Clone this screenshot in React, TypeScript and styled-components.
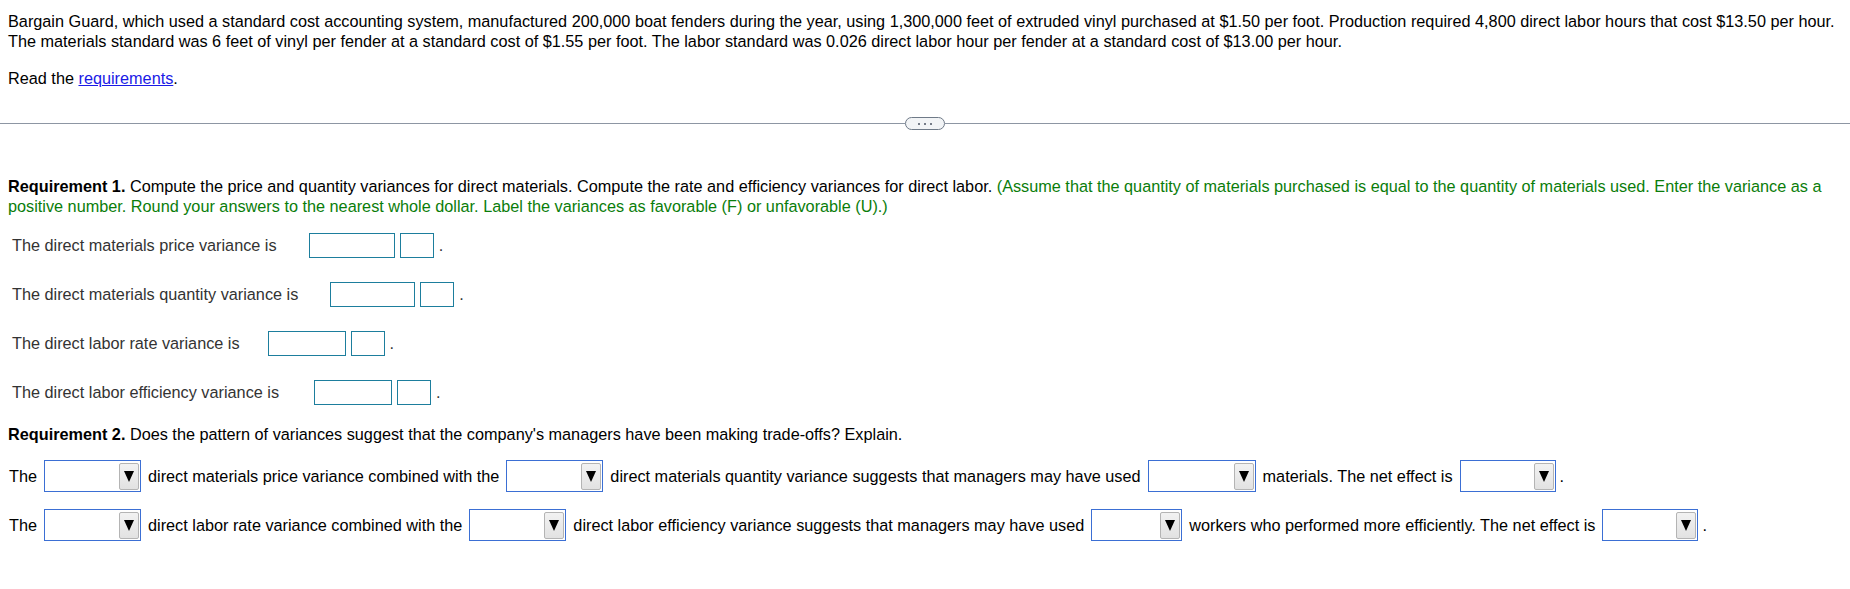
import React from "react";
import styled, { createGlobalStyle } from "styled-components";

const Global = createGlobalStyle`
  html, body { margin: 0; padding: 0; background: #fff; }
  body {
    font-family: "Liberation Sans", Arial, sans-serif;
    font-size: 16.25px;
    color: #000;
  }
`;

const Page = styled.div`
  width: 1850px;
  padding-top: 11px;
`;

const Section = styled.div`
  padding: 0 2px 0 8px;
`;

const Para = styled.p<{ $mt?: number }>`
  margin: ${(p) => p.$mt ?? 0}px 0 0;
  line-height: 20px;
`;

const Link = styled.a`
  color: #1a1ae6;
  text-decoration: underline;
`;

const Divider = styled.div`
  display: flex;
  align-items: center;
  height: 13px;
  margin-top: 29px;
`;

const Rule = styled.div`
  flex: 1;
  height: 1px;
  background: #8d96a3;
`;

const Pill = styled.div`
  width: 40px;
  height: 13px;
  box-sizing: border-box;
  border: 1px solid #6f7a88;
  border-radius: 7px;
  background: #f2f4f6;
  display: flex;
  align-items: center;
  justify-content: center;
  gap: 4px;
`;

const Dot = styled.span`
  width: 2px;
  height: 2px;
  background: #4b5563;
  border-radius: 1px;
`;

const Bold = styled.b`
  font-weight: 700;
`;

const Green = styled.span`
  color: #0a7d0a;
`;

const Rows = styled.div`
  display: flex;
  flex-direction: column;
  gap: 24px;
  margin-top: 17px;
`;

const VarRow = styled.div`
  display: flex;
  align-items: center;
  height: 25px;
  padding-left: 4px;
  color: #333;
`;

const Label = styled.span<{ $gap: number }>`
  margin-right: ${(p) => p.$gap}px;
`;

const AmountBox = styled.input<{ $w: number }>`
  width: ${(p) => p.$w}px;
  height: 25px;
  box-sizing: border-box;
  border: 1px solid #1d7e9d;
  padding: 0;
  margin: 0;
  background: #fff;
`;

const LabelBox = styled(AmountBox)`
  margin-left: 5px;
`;

const Period = styled.span`
  margin-left: 5px;
`;

const DropRows = styled.div`
  display: flex;
  flex-direction: column;
  gap: 17px;
  margin-top: 16px;
  padding-left: 1px;
`;

const DropRow = styled.div`
  display: flex;
  align-items: center;
  gap: 7px;
  height: 32px;
  white-space: nowrap;
`;

const Select = styled.div<{ $w: number }>`
  width: ${(p) => p.$w}px;
  height: 32px;
  box-sizing: border-box;
  border: 1px solid #3b6fd4;
  background: #fff;
  display: flex;
  align-items: center;
  justify-content: flex-end;
  padding-right: 1px;
`;

const ArrowBtn = styled.div`
  width: 20px;
  height: 27px;
  box-sizing: border-box;
  border: 1px solid #b4b4b4;
  border-radius: 2px;
  background: linear-gradient(#f2f2f2, #e2e2e2);
  display: flex;
  align-items: center;
  justify-content: center;
`;

const EndDot = styled.span`
  margin-left: -3px;
`;

const Drop = ({ w }: { w: number }) => (
  <Select $w={w}>
    <ArrowBtn>
      <svg width="10" height="11" viewBox="0 0 10 11">
        <polygon points="0,0 10,0 5,11" fill="#000" />
      </svg>
    </ArrowBtn>
  </Select>
);

const variances = [
  { label: "The direct materials price variance is", gap: 32, w: 86 },
  { label: "The direct materials quantity variance is", gap: 32, w: 85 },
  { label: "The direct labor rate variance is", gap: 28, w: 78 },
  { label: "The direct labor efficiency variance is", gap: 35, w: 78 },
];

export default function App() {
  return (
    <Page>
      <Global />
      <Section>
        <Para>
          Bargain Guard, which used a standard cost accounting system, manufactured 200,000 boat fenders during the year, using 1,300,000 feet of extruded vinyl purchased at $1.50 per foot. Production required 4,800 direct labor hours that cost $13.50 per hour.
          <br />
          The materials standard was 6 feet of vinyl per fender at a standard cost of $1.55 per foot. The labor standard was 0.026 direct labor hour per fender at a standard cost of $13.00 per hour.
        </Para>
        <Para $mt={17}>
          Read the <Link href="#">requirements</Link>.
        </Para>
      </Section>
      <Divider>
        <Rule />
        <Pill>
          <Dot />
          <Dot />
          <Dot />
        </Pill>
        <Rule />
      </Divider>
      <Section>
        <Para $mt={46}>
          <Bold>Requirement 1.</Bold> Compute the price and quantity variances for direct materials. Compute the rate and efficiency variances for direct labor.{" "}
          <Green>
            (Assume that the quantity of materials purchased is equal to the quantity of materials used. Enter the variance as a positive number. Round your answers to the nearest whole dollar. Label the variances as favorable (F) or unfavorable (U).)
          </Green>
        </Para>
        <Rows>
          {variances.map((v) => (
            <VarRow key={v.label}>
              <Label $gap={v.gap}>{v.label}</Label>
              <AmountBox $w={v.w} readOnly />
              <LabelBox $w={34} readOnly />
              <Period>.</Period>
            </VarRow>
          ))}
        </Rows>
        <Para $mt={19}>
          <Bold>Requirement 2.</Bold> Does the pattern of variances suggest that the company's managers have been making trade-offs? Explain.
        </Para>
        <DropRows>
          <DropRow>
            <span>The</span>
            <Drop w={97} />
            <span>direct materials price variance combined with the</span>
            <Drop w={97} />
            <span>direct materials quantity variance suggests that managers may have used</span>
            <Drop w={108} />
            <span>materials. The net effect is</span>
            <Drop w={96} />
            <EndDot>.</EndDot>
          </DropRow>
          <DropRow>
            <span>The</span>
            <Drop w={97} />
            <span>direct labor rate variance combined with the</span>
            <Drop w={97} />
            <span>direct labor efficiency variance suggests that managers may have used</span>
            <Drop w={91} />
            <span>workers who performed more efficiently. The net effect is</span>
            <Drop w={96} />
            <EndDot>.</EndDot>
          </DropRow>
        </DropRows>
      </Section>
    </Page>
  );
}
